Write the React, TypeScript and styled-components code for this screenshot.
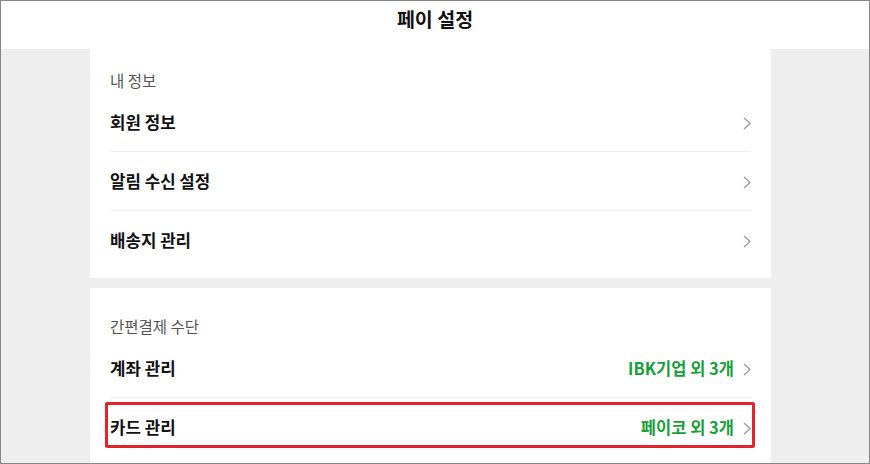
import React from "react";
import styled, { createGlobalStyle } from "styled-components";

const GlobalStyle = createGlobalStyle`
  html, body { margin: 0; padding: 0; background: #ffffff; }
  body { font-family: "Noto Sans CJK KR", "Noto Sans", sans-serif; }
  * { box-sizing: border-box; }
`;

const Frame = styled.div`
  width: 870px;
  height: 464px;
  border: 1px solid #868686;
  background: #eeeeee;
  overflow: hidden;
  display: flex;
  flex-direction: column;
`;

const Header = styled.header`
  height: 48px;
  flex: none;
  background: #ffffff;
  display: flex;
  justify-content: center;
  align-items: center;
`;

const Title = styled.h1`
  margin: 0 0 12px;
  font-size: 19.5px;
  font-weight: 700;
  color: #111111;
  line-height: 24px;
`;

const Content = styled.main`
  padding-left: 89px;
  display: flex;
  flex-direction: column;
  gap: 10px;
`;

const Card = styled.section<{ $top: number }>`
  width: 681px;
  background: #ffffff;
  padding: ${(p) => p.$top}px 20px 9px;
  flex: none;
`;

const SectionTitle = styled.h2`
  margin: 0 0 3px;
  font-size: 15.5px;
  font-weight: 400;
  color: #555555;
  line-height: 20px;
`;

const Row = styled.div`
  position: relative;
  height: 59px;
  display: flex;
  align-items: center;
  justify-content: space-between;
  border-bottom: 1px solid #f0f0f0;
  &:last-child {
    border-bottom: none;
    height: 58px;
  }
`;

const Label = styled.span`
  font-size: 16.8px;
  font-weight: 700;
  color: #111111;
`;

const Right = styled.div`
  display: flex;
  align-items: center;
  gap: 9px;
`;

const Value = styled.span`
  font-size: 16.5px;
  font-weight: 700;
  color: #17a03a;
`;

const Chevron = styled.svg`
  display: block;
  margin-top: 3px;
`;

const Highlight = styled.div`
  position: absolute;
  top: 4px;
  left: -5px;
  width: 650px;
  height: 46px;
  border: 3px solid #e6232d;
  border-radius: 2px;
  pointer-events: none;
`;

const Arrow = () => (
  <Chevron width="8" height="13" viewBox="0 0 8 13">
    <polyline points="1,1 7,6.5 1,12" fill="none" stroke="#9a9a9a" strokeWidth="1.3" />
  </Chevron>
);

type Item = { label: string; value?: string; highlight?: boolean };

const sections: { title: string; top: number; items: Item[] }[] = [
  {
    title: "내 정보",
    top: 21,
    items: [{ label: "회원 정보" }, { label: "알림 수신 설정" }, { label: "배송지 관리" }],
  },
  {
    title: "간편결제 수단",
    top: 28,
    items: [
      { label: "계좌 관리", value: "IBK기업 외 3개" },
      { label: "카드 관리", value: "페이코 외 3개", highlight: true },
    ],
  },
];

export default function App() {
  return (
    <>
      <GlobalStyle />
      <Frame>
        <Header>
          <Title>페이 설정</Title>
        </Header>
        <Content>
          {sections.map((s) => (
            <Card key={s.title} $top={s.top}>
              <SectionTitle>{s.title}</SectionTitle>
              {s.items.map((it) => (
                <Row key={it.label}>
                  <Label>{it.label}</Label>
                  <Right>
                    {it.value && <Value>{it.value}</Value>}
                    <Arrow />
                  </Right>
                  {it.highlight && <Highlight />}
                </Row>
              ))}
            </Card>
          ))}
        </Content>
      </Frame>
    </>
  );
}
